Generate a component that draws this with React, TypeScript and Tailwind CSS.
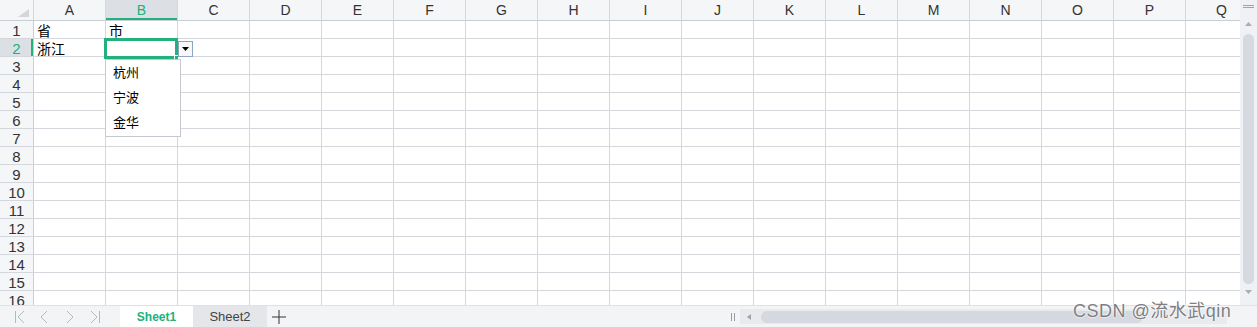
import React from "react";

const cols = "ABCDEFGHIJKLMNOPQ".split("");
const rows = Array.from({ length: 16 }, (_, i) => i + 1);

const cellText: Record<string, string> = {
  A1: "省",
  B1: "市",
  A2: "浙江",
};

const options = ["杭州", "宁波", "金华"];

function VScroll() {
  return (
    <div className="w-[17px] h-[305px] shrink-0 bg-[#eff1f4] flex flex-col items-center">
      <div className="mt-[5px] flex flex-col gap-[1px]">
        <div className="w-[11px] h-[1px] bg-[#9ea2aa]" />
        <div className="w-[11px] h-[1px] bg-[#9ea2aa]" />
      </div>
      <svg className="mt-[14px]" width="7" height="4" viewBox="0 0 7 4">
        <path d="M0 4 L3.5 0 L7 4 Z" fill="#a9adb5" />
      </svg>
      <div className="mt-[8px] w-[11px] h-[250px] rounded-full bg-[#d6d9df]" />
      <svg className="mt-[6px]" width="7" height="4" viewBox="0 0 7 4">
        <path d="M0 0 L3.5 4 L7 0 Z" fill="#a9adb5" />
      </svg>
    </div>
  );
}

function NavIcon({ d }: { d: string }) {
  return (
    <svg width="12" height="14" viewBox="0 0 12 14" fill="none">
      <path d={d} stroke="#b5b8bf" strokeWidth="1" />
    </svg>
  );
}

function TabBar() {
  return (
    <div className="h-[22px] bg-[#f3f4f6] border-t border-[#dfe1e5] flex items-stretch">
      <div className="w-[120px] flex items-center pl-[14px] gap-[13px]">
        <NavIcon d="M1.5 1 V13 M10 1 L4 7 L10 13" />
        <NavIcon d="M8 1 L2 7 L8 13" />
        <NavIcon d="M3 1 L9 7 L3 13" />
        <NavIcon d="M2 1 L8 7 L2 13 M10.5 1 V13" />
      </div>
      <div className="w-[73px] bg-white flex items-center justify-center text-[12px] font-bold text-[#22b07d]">
        Sheet1
      </div>
      <div className="w-[74px] bg-[#e4e6ea] flex items-center justify-center text-[13px] text-[#444]">
        Sheet2
      </div>
      <div className="w-[24px] flex items-center justify-center">
        <svg width="14" height="14" viewBox="0 0 14 14">
          <path d="M7 0 V14 M0 7 H14" stroke="#333" strokeWidth="1" />
        </svg>
      </div>
      <div className="flex-1" />
      <div className="w-[9px] flex items-center gap-[2px]">
        <div className="w-[1px] h-[8px] bg-[#9a9da4]" />
        <div className="w-[1px] h-[8px] bg-[#9a9da4]" />
      </div>
      <div className="w-[487px] my-[3px] bg-[#e8eaee] flex items-center">
        <svg className="ml-[7px]" width="4" height="6" viewBox="0 0 4 6">
          <path d="M4 0 L0 3 L4 6 Z" fill="#9ea2aa" />
        </svg>
        <div className="ml-[10px] w-[382px] h-[12px] rounded-full bg-[#d5d8de]" />
      </div>
      <div className="w-[30px]" />
    </div>
  );
}

export default function App() {
  return (
    <div className="relative w-[1257px] h-[327px] overflow-hidden bg-white flex flex-col text-[#333] font-['Liberation_Sans','Noto_Sans_CJK_SC',sans-serif]">
      <div className="flex h-[305px]">
        <div className="relative w-[1240px] h-[305px] overflow-hidden">
          {/* column headers */}
          <div className="flex h-[21px] bg-[#f5f6f8] border-b border-[#c9cdd4]">
            <div className="w-[34px] shrink-0 border-r border-[#d4d7dc] relative">
              <svg className="absolute left-[18px] top-[9px]" width="11" height="8" viewBox="0 0 11 8">
                <path d="M11 0 L11 8 L0 8 Z" fill="#d3d6db" />
              </svg>
            </div>
            {cols.map((c) => (
              <div
                key={c}
                className={
                  c === "B"
                    ? "w-[72px] shrink-0 border-r border-[#d4d7dc] flex items-center justify-center pt-[1px] text-[14px] bg-[#dcdfe4] text-[#22b07d] shadow-[inset_0_-2px_0_#22b07d]"
                    : "w-[72px] shrink-0 border-r border-[#d4d7dc] flex items-center justify-center pt-[1px] text-[14px]"
                }
              >
                {c}
              </div>
            ))}
          </div>

          {/* rows */}
          {rows.map((r) => (
            <div key={r} className="flex h-[18px] border-b border-[#d4d7dc]">
              <div
                className={
                  r === 2
                    ? "w-[34px] shrink-0 border-r border-[#c9cdd4] bg-[#dcdfe4] text-[#22b07d] text-center text-[15px] leading-[20px] overflow-hidden shadow-[inset_-2px_0_0_#22b07d]"
                    : "w-[34px] shrink-0 border-r border-[#c9cdd4] bg-[#f5f6f8] text-center text-[15px] leading-[20px] overflow-hidden"
                }
              >
                {r}
              </div>
              {cols.map((c) => (
                <div
                  key={c}
                  className="w-[72px] shrink-0 border-r border-[#d4d7dc] pl-[3px] text-[14px] leading-[20px] text-black whitespace-nowrap overflow-hidden"
                >
                  {cellText[c + r] ?? ""}
                </div>
              ))}
            </div>
          ))}

          {/* selected cell B2 */}
          <div className="absolute left-[104px] top-[38px] w-[74px] h-[21px] border-[3px] border-[#22b07d]">
            <div className="absolute right-[-4px] bottom-[-4px] w-[5px] h-[5px] bg-[#22b07d] border border-white" />
          </div>

          {/* dropdown button */}
          <div className="absolute left-[178px] top-[41px] w-[15px] h-[16px] border border-[#8da4c4] bg-[#f8f8f8] flex items-center justify-center">
            <svg width="7" height="4" viewBox="0 0 7 4">
              <path d="M0 0 L7 0 L3.5 4 Z" fill="#000" />
            </svg>
          </div>

          {/* dropdown list */}
          <div className="absolute left-[105px] top-[59px] w-[76px] h-[78px] border border-[#c5c8ce] bg-white">
            {options.map((o) => (
              <div key={o} className="h-[25px] flex items-center pl-[7px] text-[13px] text-black">
                {o}
              </div>
            ))}
          </div>
        </div>
        <VScroll />
      </div>
      <TabBar />

      <div className="absolute left-[1073px] top-[298px] text-[18px] tracking-[0.5px] text-[#7d7f84] [text-shadow:0_0_2px_#fff,0_0_2px_#fff] whitespace-nowrap">
        CSDN @流水武qin
      </div>
    </div>
  );
}
